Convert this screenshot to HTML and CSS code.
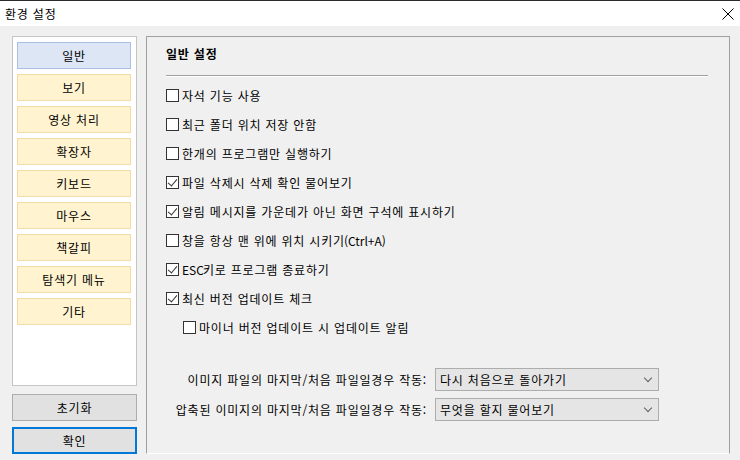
FILE: index.html
```html
<!DOCTYPE html>
<html lang="ko">
<head>
    <meta charset="UTF-8">
    <title>환경 설정</title>
    <link rel="stylesheet" href="styles.css">
</head>
<body>
    <!-- 타이틀 바 -->
    <div class="titlebar">
        <span class="title">환경 설정</span>
        <svg class="close" width="12" height="12" viewBox="0 0 12 12">
            <path d="M0.5 0.5 L11.5 11.5 M11.5 0.5 L0.5 11.5" stroke="#000" stroke-width="1" fill="none"/>
        </svg>
    </div>

    <div class="main">
        <!-- 왼쪽 메뉴 -->
        <div class="side">
            <div class="nav">
                <div class="nav-btn active">일반</div>
                <div class="nav-btn">보기</div>
                <div class="nav-btn">영상 처리</div>
                <div class="nav-btn">확장자</div>
                <div class="nav-btn">키보드</div>
                <div class="nav-btn">마우스</div>
                <div class="nav-btn">책갈피</div>
                <div class="nav-btn">탐색기 메뉴</div>
                <div class="nav-btn">기타</div>
            </div>
            <div class="btn">초기화</div>
            <div class="btn primary">확인</div>
        </div>

        <!-- 설정 내용 -->
        <div class="panel">
            <div class="heading">일반 설정</div>
            <div class="sep"></div>

            <div class="options">
                <label class="opt"><span class="box"></span>자석 기능 사용</label>
                <label class="opt"><span class="box"></span>최근 폴더 위치 저장 안함</label>
                <label class="opt"><span class="box"></span>한개의 프로그램만 실행하기</label>
                <label class="opt"><span class="box checked"></span>파일 삭제시 삭제 확인 물어보기</label>
                <label class="opt"><span class="box checked"></span>알림 메시지를 가운데가 아닌 화면 구석에 표시하기</label>
                <label class="opt"><span class="box"></span><span>창을 항상 맨 위에 위치 시키기<span class="latin key">(Ctrl+A)</span></span></label>
                <label class="opt"><span class="box checked"></span><span><span class="latin esc">ESC</span>키로 프로그램 종료하기</span></label>
                <label class="opt"><span class="box checked"></span>최신 버전 업데이트 체크</label>
                <label class="opt sub"><span class="box"></span>마이너 버전 업데이트 시 업데이트 알림</label>
            </div>

            <div class="selects">
                <span class="sel-label">이미지 파일의 마지막/처음 파일일경우 작동:</span>
                <div class="select">다시 처음으로 돌아가기<span class="chev"></span></div>
                <span class="sel-label">압축된 이미지의 마지막/처음 파일일경우 작동:</span>
                <div class="select">무엇을 할지 물어보기<span class="chev"></span></div>
            </div>
        </div>
    </div>
</body>
</html>
```

FILE: styles.css
```css
* {
    box-sizing: border-box;
}
body {
    margin: 0;
    width: 740px;
    height: 460px;
    overflow: hidden;
    background: #f0f0f0;
    font-family: "Noto Sans CJK KR", "Noto Sans", sans-serif;
    font-size: 12px;
    letter-spacing: 0.8px;
    color: #000;
}
.titlebar {
    height: 26px;
    background: #fff;
    border-top: 1px solid #2b2b2b;
    display: flex;
    align-items: center;
    justify-content: space-between;
    padding: 0 6px 0 5px;
}
.title {
    font-size: 12px;
}
.close {
    display: block;
    margin-top: 1px;
}
.main {
    display: flex;
    padding: 10px 10px 0 12px;
    gap: 9px;
}
.side {
    width: 125px;
    display: flex;
    flex-direction: column;
}
.nav {
    height: 350px;
    background: #fff;
    border: 1px solid #c4c4c4;
    padding: 5px 5px 0 4px;
    display: flex;
    flex-direction: column;
    gap: 5px;
}
.nav-btn {
    height: 27px;
    background: #fff3d0;
    border: 1px solid #f1dca8;
    display: flex;
    align-items: center;
    justify-content: center;
}
.nav-btn.active {
    background: #dce6f4;
    border-color: #a9c0e3;
}
.btn {
    height: 27px;
    margin-top: 8px;
    background: #e1e1e1;
    border: 1px solid #adadad;
    display: flex;
    align-items: center;
    justify-content: center;
}
.btn.primary {
    margin-top: 6px;
    border: 2px solid #0078d7;
}
.panel {
    width: 584px;
    height: 418px;
    border: 1px solid #a0a0a0;
    border-bottom-color: #fff;
    padding: 7px 21px 0 19px;
}
.heading {
    font-weight: bold;
    height: 20px;
    line-height: 20px;
}
.sep {
    height: 2px;
    margin-top: 11px;
    border-top: 1px solid #a0a0a0;
    border-bottom: 1px solid #fff;
}
.options {
    margin-top: 4px;
    display: flex;
    flex-direction: column;
}
.opt {
    height: 29px;
    display: flex;
    align-items: center;
    gap: 3px;
}
.opt.sub {
    padding-left: 17px;
}
.latin {
    letter-spacing: 0;
}
.esc {
    margin-right: -1px;
}
.key {
    margin-left: -1px;
}
.box {
    width: 13px;
    height: 13px;
    border: 1px solid #333;
    background: #fff;
    position: relative;
    flex: none;
}
.box.checked::after {
    content: "";
    position: absolute;
    left: 3px;
    top: 0px;
    width: 4px;
    height: 8px;
    border-right: 1px solid #333;
    border-bottom: 1px solid #333;
    transform: rotate(40deg);
}
.selects {
    margin-top: 26px;
    display: grid;
    grid-template-columns: 261px 224px;
    column-gap: 8px;
    row-gap: 7px;
    align-items: center;
}
.sel-label {
    text-align: right;
}
.select {
    height: 23px;
    background: #e5e5e5;
    border: 1px solid #adadad;
    padding: 0 0 0 4px;
    display: flex;
    align-items: center;
    position: relative;
}
.chev {
    position: absolute;
    right: 7px;
    top: 6px;
    width: 6px;
    height: 6px;
    border-right: 1px solid #606060;
    border-bottom: 1px solid #606060;
    transform: rotate(45deg);
}
```
